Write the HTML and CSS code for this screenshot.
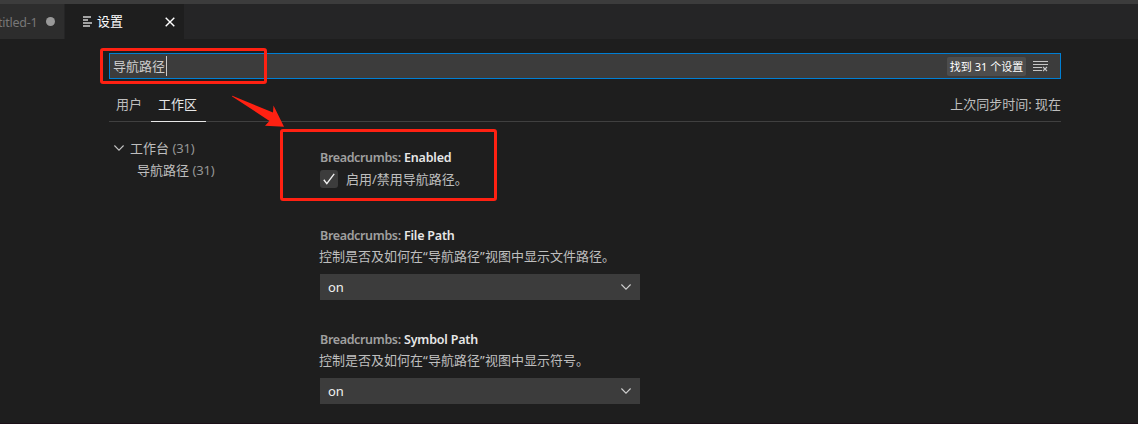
FILE: index.html
```html
<!DOCTYPE html>
<html lang="zh-CN">
<head>
<meta charset="utf-8">
<title>设置</title>
<link rel="stylesheet" href="styles.css">
</head>
<body>
<div class="window">
  <div class="titlebar"></div>
  <nav class="tabs">
    <div class="tab"><span class="tab-name">titled-1</span><span class="dirty"></span></div>
    <div class="tab active">
      <svg class="tab-icon" width="10" height="11" viewBox="0 0 10 11"><path d="M0 1.500h8M0 4.500h5M0 7.500h9M0 10.500h7" transform="translate(0 -.5)" stroke="#d0d0d0" stroke-width="1.5"/></svg>
      <span class="tab-title">设置</span>
      <svg class="close" width="10" height="10" viewBox="0 0 10 10"><path d="M.7.7l8.6 8.6M9.3.7L.7 9.3" stroke="#fff" stroke-width="1.4"/></svg>
    </div>
  </nav>
  <main class="editor">
    <div class="search">
      <span class="query">导航路径</span><span class="caret"></span>
      <span class="count">找到 31 个设置</span>
      <svg class="clear" width="16" height="12" viewBox="0 0 16 12"><path d="M0 1.5h15M0 4.500h15M0 7.500h9M0 10.500h9" stroke="#c5c5c5"/><path d="M10 7l4 4M14 7l-4 4" stroke="#c5c5c5" stroke-width="1.1"/></svg>
    </div>
    <div class="scopes">
      <span class="scope">用户</span>
      <span class="scope current">工作区</span>
      <span class="sync">上次同步时间: 现在</span>
    </div>
    <div class="content">
      <div class="tree">
        <div class="node"><svg class="chevron" width="10" height="6" viewBox="0 0 10 6"><path d="M.4.5L5 5.1 9.6.5" fill="none" stroke="#c5c5c5" stroke-width="1.1"/></svg>工作台&nbsp;<span class="num">(31)</span></div>
        <div class="node child">导航路径&nbsp;<span class="num">(31)</span></div>
      </div>
      <div class="settings">
        <section class="setting first">
          <h3><span class="category">Breadcrumbs:</span><b>Enabled</b></h3>
          <div class="check-row"><span class="checkbox"><svg width="12" height="12" viewBox="0 0 12 12"><path d="M.8 6.8l3 3.8L11.2.8" fill="none" stroke="#f0f0f0" stroke-width="1.4"/></svg></span><p>启用/禁用导航路径。</p></div>
        </section>
        <section class="setting second">
          <h3><span class="category">Breadcrumbs:</span><b>File Path</b></h3>
          <p>控制是否及如何在<span class="quote">“</span>导航路径<span class="quote">”</span>视图中显示文件路径。</p>
          <div class="select"><span>on</span><svg width="10" height="6" viewBox="0 0 10 6"><path d="M.4.5L5 5.1 9.6.5" fill="none" stroke="#d0d0d0" stroke-width="1.1"/></svg></div>
        </section>
        <section class="setting">
          <h3><span class="category">Breadcrumbs:</span><b>Symbol Path</b></h3>
          <p>控制是否及如何在<span class="quote">“</span>导航路径<span class="quote">”</span>视图中显示符号。</p>
          <div class="select"><span>on</span><svg width="10" height="6" viewBox="0 0 10 6"><path d="M.4.5L5 5.1 9.6.5" fill="none" stroke="#d0d0d0" stroke-width="1.1"/></svg></div>
        </section>
      </div>
    </div>
  </main>
  <div class="mark mark-search"></div>
  <div class="mark mark-setting"></div>
  <svg class="arrow" width="56" height="34" viewBox="0 0 56 34"><path d="M.8 1.200Q1.500.5 2.500 1.200L42 17.500 42.500 10.500 53 31.800 34 30.800 38.500 26Z" fill="#ff2112"/></svg>
</div>
</body>
</html>
```
FILE: styles.css
```css
* { box-sizing: border-box; }
body {
  margin: 0;
  background: #1e1e1e;
  color: #bebebe;
  font: 13px/20px "Noto Sans", "Noto Sans CJK SC", sans-serif;
}
.window {
  position: relative;
  width: 1138px;
  height: 424px;
  overflow: hidden;
  white-space: nowrap;
  border-bottom: 1px solid #1b1017;
}
.titlebar { height: 4px; background: #3c3c3c; }
.tabs { display: flex; height: 35px; background: #252526; }
.tab {
  display: flex;
  align-items: center;
  width: 65px;
  background: #2d2d2d;
  border-right: 1px solid #252526;
  color: #777;
}
.tab-name { margin: 2px 0 0 -2px; width: 48px; font-size: 12.500px; letter-spacing: -.25px; }
.dirty { width: 9px; height: 9px; border-radius: 50%; background: #999; }
.tab.active { width: 119px; padding-left: 18px; background: #1e1e1e; border: 0; color: #fff; }
.tab-icon { margin-top: -1px; }
.tab-title { margin: -1px 0 0 4px; }
.close { margin-left: 42px; }
.editor { width: 952px; margin: 14px 0 0 109px; }
.search {
  display: flex;
  align-items: center;
  height: 26px;
  padding: 0 19px 0 3px;
  background: #3c3c3c;
  border: 1px solid #007fd4;
  color: #ccc;
}
.query { width: 53px; }
.caret { width: 1px; height: 20px; background: #ccc; }
.count {
  width: 79px;
  height: 19px;
  margin-left: auto;
  border-radius: 2px;
  background: #4d4d4d;
  color: #fff;
  font-size: 11px;
  line-height: 19px;
  text-align: center;
}
.clear { margin-left: 7px; margin-right: -8px; }
.scopes { display: flex; height: 43px; padding-top: 15px; border-bottom: 1px solid #404040; }
.scope { height: 28px; padding: 0 9px 0 7px; }
.scope.current { color: #e7e7e7; border-bottom: 1px solid #e7e7e7; }
.sync { margin-left: auto; }
.content { display: flex; padding-top: 15px; }
.tree { width: 211px; line-height: 22px; }
.node { display: flex; align-items: center; height: 22px; padding-left: 5px; }
.child { padding-left: 28px; }
.chevron { margin-right: 6px; }
.num { color: #969696; letter-spacing: -.15px; }
.settings { width: 320px; padding-top: 11px; }
.setting { height: 104px; }
.setting.first { height: 78px; }
h3 { display: flex; height: 19px; margin: 0; font-size: 12.500px; font-weight: 600; line-height: 20px; }
.category { width: 84px; color: #a0a0a0; letter-spacing: -.35px; }
h3 b { color: #e7e7e7; font-weight: 600; letter-spacing: -.2px; }
p { margin: 0 0 0 -1px; line-height: 22px; }
.quote { display: inline-block; width: 5px; font-family: "Noto Sans", sans-serif; }
.check-row { display: flex; align-items: center; height: 24px; }
.check-row p { margin-left: 8px; }
.checkbox { display: grid; place-items: center; width: 18px; height: 18px; border-radius: 3px; background: #3c3c3c; }
.select {
  display: flex;
  align-items: center;
  justify-content: space-between;
  height: 26px;
  margin-top: 7px;
  padding: 0 9px 0 8px;
  background: #3c3c3c;
  color: #f0f0f0;
}
.mark { position: absolute; border: 3px solid #ff2112; border-radius: 3px; }
.mark-search { left: 100px; top: 48px; width: 167px; height: 36px; }
.mark-setting { left: 280px; top: 129px; width: 217px; height: 72px; }
.arrow { position: absolute; left: 231px; top: 95px; }
```
